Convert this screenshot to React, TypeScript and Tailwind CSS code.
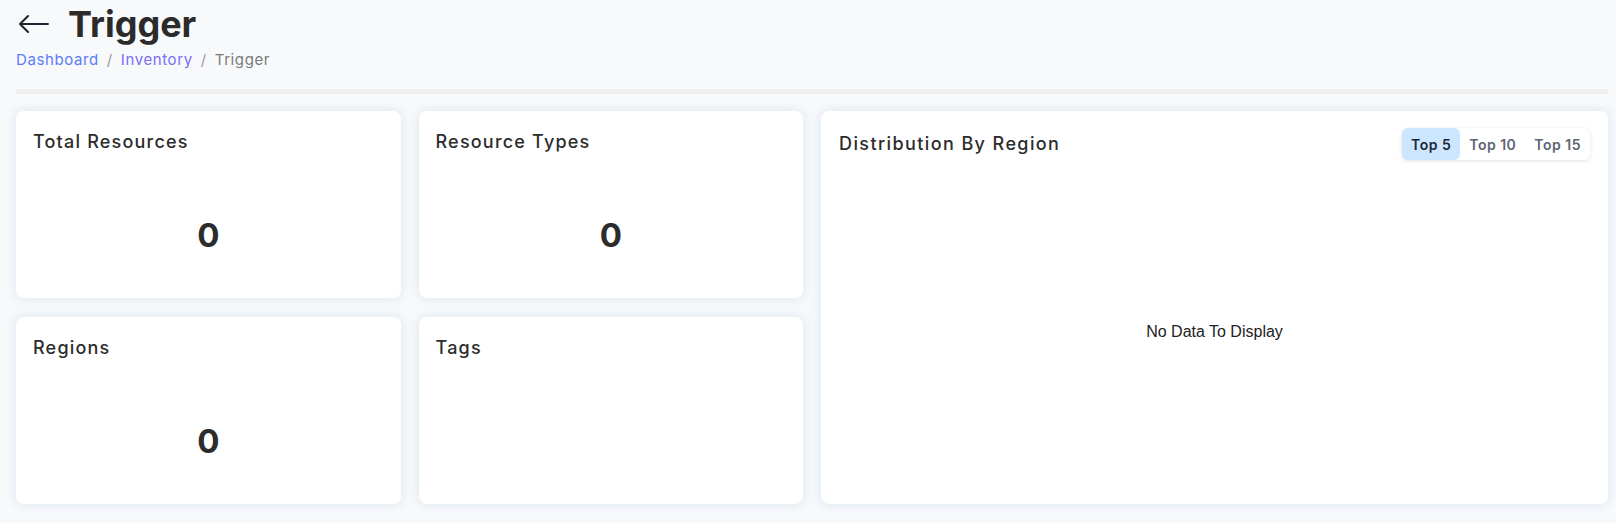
import { useState } from 'react';

const font = { fontFamily: 'Inter, "Noto Sans", sans-serif' };

function StatCard({ title, value }: { title: string; value?: number }) {
  return (
    <div className="flex flex-col rounded-lg bg-white pl-[17px] pr-4 pt-[19px] shadow-[0_0_12px_rgba(176,206,226,0.45)]">
      <h3 className="text-[18px] font-medium leading-[24px] tracking-[1.2px] text-[#2c2c2c]">{title}</h3>
      {value !== undefined && (
        <div className="mt-[61px] text-center text-[33px] font-bold leading-[40px] tracking-[0.5px] text-[#2c2c2c]">
          {value}
        </div>
      )}
    </div>
  );
}

export default function App() {
  const [top, setTop] = useState(5);

  return (
    <div className="min-h-screen bg-[#f8f9fb] pb-4 pl-4 pr-2" style={font}>
      <div className="flex h-[48px] items-center">
        <svg className="ml-[2px] h-[20px] w-[31px] text-[#1f2430]" viewBox="0 0 31 20" fill="none">
          <path d="M30 10H2M10 2L2 10l8 8" stroke="currentColor" strokeWidth="2" strokeLinecap="round" strokeLinejoin="round" />
        </svg>
        <h1 className="ml-[19px] text-[36px] font-bold leading-[48px] text-[#2b2b2b]">Trigger</h1>
      </div>

      <nav className="mt-[1px] flex h-[22px] items-center text-[15px] leading-[22px] tracking-[0.6px]">
        <a className="text-[#5c7cfa]">Dashboard</a>
        <span className="mx-[8px] text-[#9a9a9a]">/</span>
        <a className="text-[#7b6ef3]">Inventory</a>
        <span className="mx-[8px] text-[#9a9a9a]">/</span>
        <span className="text-[#7a7a7a]">Trigger</span>
      </nav>

      <div className="mt-[18px] h-[5px] bg-[#efefef]" />

      <div className="mt-[17px] grid grid-cols-4 grid-rows-[187px_187px] gap-x-[18px] gap-y-[19px]">
        <StatCard title="Total Resources" value={0} />
        <StatCard title="Resource Types" value={0} />

        <div className="col-span-2 row-span-2 flex flex-col rounded-lg bg-white shadow-[0_0_12px_rgba(176,206,226,0.45)]">
          <div className="flex items-center justify-between pl-[18px] pr-[18px] pt-[17px]">
            <h3 className="text-[18px] font-medium leading-[24px] tracking-[1.4px] text-[#2c2c2c]">
              Distribution By Region
            </h3>
            <div className="flex h-8 rounded-md bg-white shadow-[0_1px_4px_rgba(0,0,0,0.12)]">
              {[5, 10, 15].map((n) => (
                <button
                  key={n}
                  onClick={() => setTop(n)}
                  className={`h-8 rounded-md px-[9px] text-[14px] font-semibold tracking-[0.5px] ${
                    top === n ? 'bg-[#cce6ff] text-[#1e2633]' : 'text-[#5d6673]'
                  }`}
                >
                  Top {n}
                </button>
              ))}
            </div>
          </div>
          <div
            className="flex flex-1 items-center justify-center text-[16px] text-[#222]"
            style={{ fontFamily: '"Liberation Sans", Arial, sans-serif' }}
          >
            No Data To Display
          </div>
        </div>

        <StatCard title="Regions" value={0} />
        <StatCard title="Tags" />
      </div>
    </div>
  );
}
